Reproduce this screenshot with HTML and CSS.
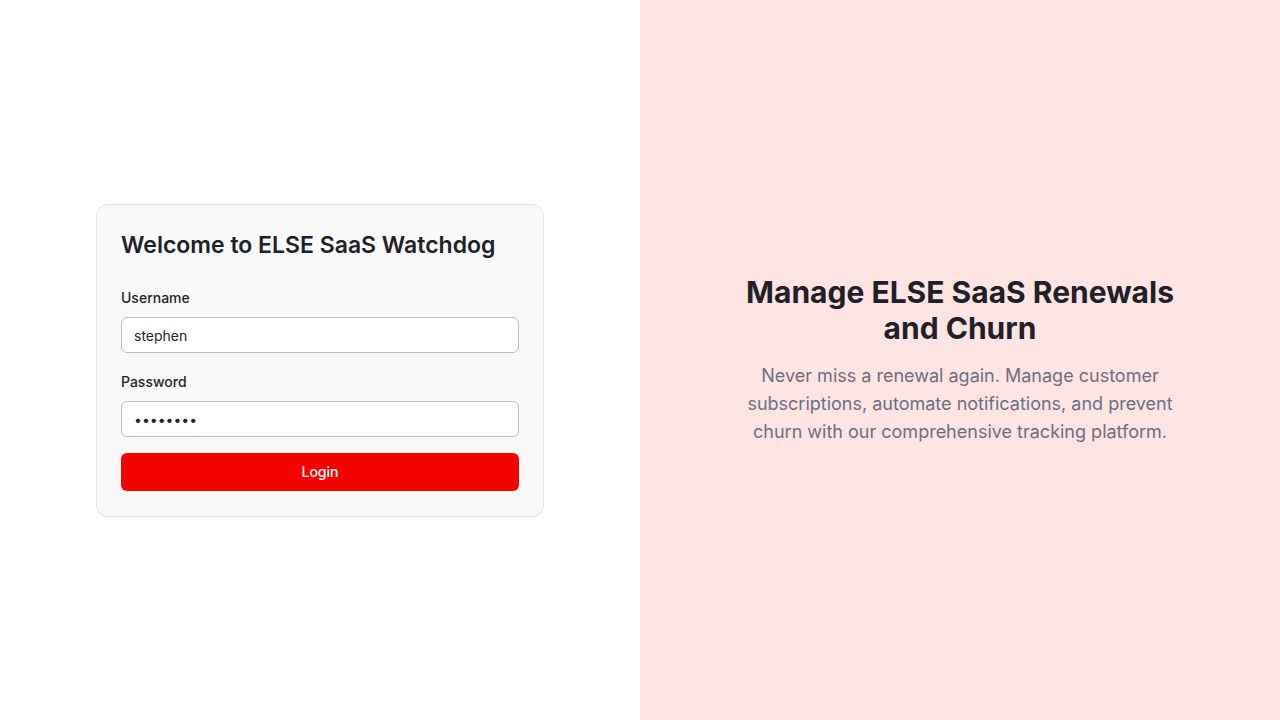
FILE: index.html
```html
<!DOCTYPE html>
<html lang="en">
<head>
<meta charset="utf-8">
<title>ELSE SaaS Watchdog - Login</title>
<link rel="stylesheet" href="styles.css">
</head>
<body>
<div class="page">
  <section class="left">
    <form class="card">
      <h2 class="card-title">Welcome to ELSE SaaS Watchdog</h2>
      <div class="field field-first">
        <label class="label" for="u">Username</label>
        <input class="input" id="u" type="text" value="stephen">
      </div>
      <div class="field">
        <label class="label" for="p">Password</label>
        <input class="input" id="p" type="password" value="password">
      </div>
      <button class="btn" type="button">Login</button>
    </form>
  </section>
  <section class="right">
    <div class="hero">
      <h1 class="hero-title">Manage ELSE SaaS Renewals and Churn</h1>
      <p class="hero-text">Never miss a renewal again. Manage customer subscriptions, automate notifications, and prevent churn with our comprehensive tracking platform.</p>
    </div>
  </section>
</div>
</body>
</html>
```

FILE: styles.css
```css
* { box-sizing: border-box; }
html, body { margin: 0; padding: 0; }
body {
  font-family: Inter, "Noto Sans", sans-serif;
  color: #212529;
}
.page {
  display: flex;
  height: 720px;
}
.left {
  flex: 1;
  background: #ffffff;
  display: flex;
  align-items: center;
  justify-content: center;
}
.right {
  flex: 1;
  background: #ffe4e4;
  display: flex;
  align-items: center;
  justify-content: center;
}
.card {
  width: 448px;
  background: #f9f9fa;
  border: 1px solid #e0e2e6;
  border-radius: 12px;
  padding: 24px 24px 25px;
  display: flex;
  flex-direction: column;
}
.card-title {
  font-family: Inter, sans-serif;
  font-size: 23px;
  font-weight: 600;
  line-height: 32px;
  margin: 0 0 26px;
  color: #1f2128;
}
.field {
  display: flex;
  flex-direction: column;
  margin-bottom: 16px;
}
.field-first {
  margin-bottom: 18px;
}
.label {
  font-family: Inter, sans-serif;
  font-size: 14px;
  font-weight: 500;
  line-height: 20px;
  margin: 1px 0 9px;
  color: #212529;
}
.input {
  height: 36px;
  border: 1px solid #b9bccc;
  border-radius: 6px;
  background: #fff;
  padding: 1px 12px 0;
  font-family: Inter, sans-serif;
  font-size: 14px;
  color: #212529;
  outline: none;
}
.btn {
  height: 38px;
  border: none;
  border-radius: 6px;
  background: #f70000;
  color: #fff;
  font-family: Inter, sans-serif;
  font-size: 14px;
  font-weight: 500;
  cursor: pointer;
}
.hero {
  width: 450px;
  text-align: center;
}
.hero-title {
  font-family: Inter, sans-serif;
  font-size: 30px;
  font-weight: 700;
  line-height: 36px;
  margin: 0 0 16px;
  color: #1f2128;
}
.hero-text {
  font-family: Inter, sans-serif;
  font-size: 18px;
  line-height: 28px;
  margin: 0;
  color: #6b7080;
}
```
